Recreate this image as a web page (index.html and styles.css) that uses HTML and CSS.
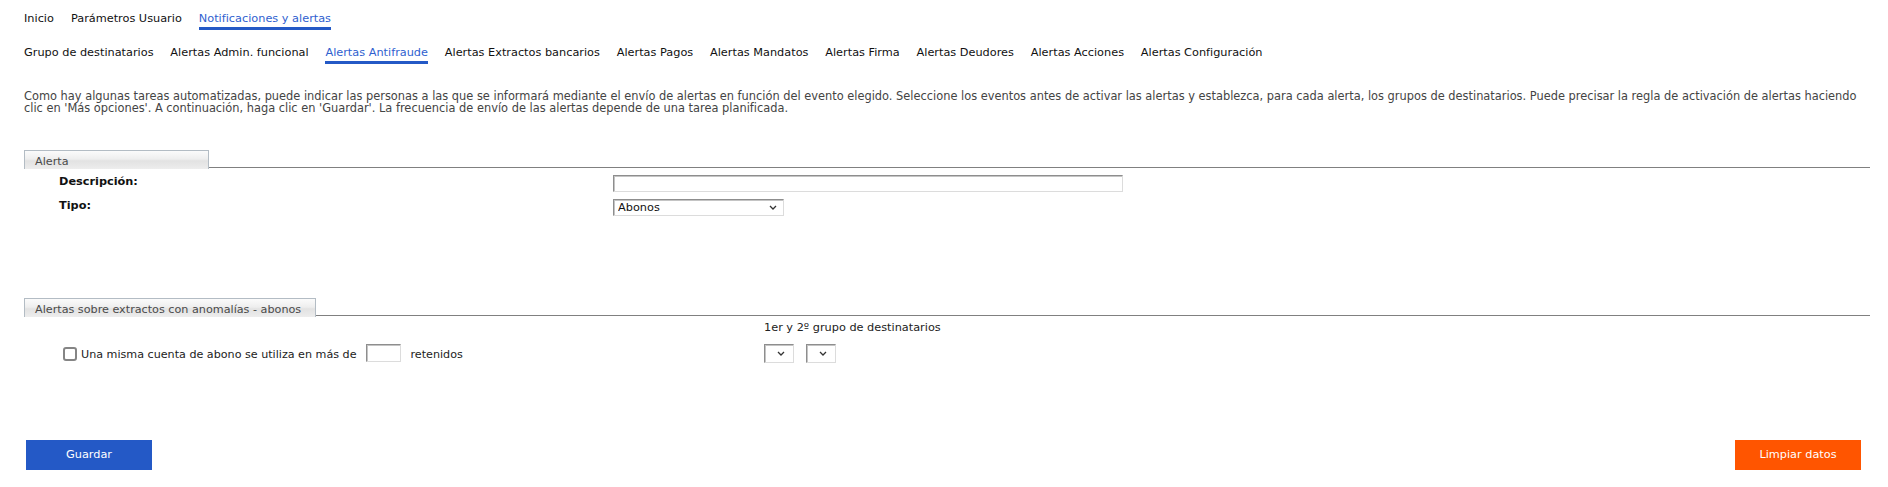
FILE: index.html
```html
<!DOCTYPE html>
<html lang="es">
<head>
  <title>Notificaciones y alertas</title>
  <link rel="stylesheet" href="styles.css">
</head>
<body>

  <div class="page">
    <nav class="menu menu-main">
      <a href="#">Inicio</a>
      <a href="#">Parámetros Usuario</a>
      <a href="#" class="active">Notificaciones y alertas</a>
    </nav>

    <nav class="menu menu-sub">
      <a href="#">Grupo de destinatarios</a>
      <a href="#">Alertas Admin. funcional</a>
      <a href="#" class="active">Alertas Antifraude</a>
      <a href="#">Alertas Extractos bancarios</a>
      <a href="#">Alertas Pagos</a>
      <a href="#">Alertas Mandatos</a>
      <a href="#">Alertas Firma</a>
      <a href="#">Alertas Deudores</a>
      <a href="#">Alertas Acciones</a>
      <a href="#">Alertas Configuración</a>
    </nav>

    <p class="intro">Como hay algunas tareas automatizadas, puede indicar las personas a las que se informará mediante el envío de alertas en función del evento elegido. Seleccione los eventos antes de activar las alertas y establezca, para cada alerta, los grupos de destinatarios. Puede precisar la regla de activación de alertas haciendo clic en 'Más opciones'. A continuación, haga clic en 'Guardar'. La frecuencia de envío de las alertas depende de una tarea planificada.</p>

    <!-- Alerta -->
    <section class="panel">
      <div class="panel-head">
        <span class="panel-tab tab-alert">Alerta</span>
        <span class="panel-rule"></span>
      </div>
      <div class="form-grid">
        <label for="desc">Descripción:</label>
        <input type="text" id="desc" class="field field-wide">
        <label for="tipo">Tipo:</label>
        <span class="select select-type">
          <select id="tipo"><option>Abonos</option></select>
          <svg viewBox="0 0 8 5" width="8" height="5"><path d="M1 1l3 3 3-3" fill="none" stroke="#333" stroke-width="1.3"/></svg>
        </span>
      </div>
    </section>

    <!-- Reglas -->
    <section class="panel panel-rules">
      <div class="panel-head">
        <span class="panel-tab tab-rules">Alertas sobre extractos con anomalías - abonos</span>
        <span class="panel-rule"></span>
      </div>
      <div class="rules-grid">
        <span></span>
        <div class="group-head">1er y 2º grupo de destinatarios</div>
        <div class="rule">
          <input type="checkbox" class="check" id="rule1">
          <label for="rule1">Una misma cuenta de abono se utiliza en más de</label>
          <input type="text" class="field field-small">
          <span>retenidos</span>
        </div>
        <div class="groups">
          <span class="select select-small">
            <select><option></option></select>
            <svg viewBox="0 0 8 5" width="8" height="5"><path d="M1 1l3 3 3-3" fill="none" stroke="#333" stroke-width="1.3"/></svg>
          </span>
          <span class="select select-small">
            <select><option></option></select>
            <svg viewBox="0 0 8 5" width="8" height="5"><path d="M1 1l3 3 3-3" fill="none" stroke="#333" stroke-width="1.3"/></svg>
          </span>
        </div>
      </div>
    </section>

    <div class="actions">
      <button class="btn btn-save">Guardar</button>
      <button class="btn btn-clear">Limpiar datos</button>
    </div>
  </div>

</body>
</html>
```
FILE: styles.css
```css
:root {
  --blue: #2459c6;
  --blue-text: #2f5fcf;
  --orange: #ff5500;
  --text: #111;
  --muted: #444;
  --rule: #808080;
}

* {
  box-sizing: border-box;
}

body {
  margin: 0;
  font-family: 'DejaVu Sans', Verdana, sans-serif;
  font-size: 11.3px;
  color: var(--text);
  background: #fff;
}

.page {
  padding: 0 18px 0 24px;
}

/* menus */
.menu {
  display: flex;
  gap: 17px;
}

.menu a {
  color: #111;
  text-decoration: none;
  line-height: 17px;
  border-bottom: 3px solid transparent;
}

.menu a.active {
  color: var(--blue-text);
  border-bottom-color: var(--blue);
}

.menu-main {
  padding-top: 10px;
}

.menu-sub {
  margin-top: 14px;
  gap: 16.8px;
}

.intro {
  margin: 27px 0 0;
  line-height: 11.8px;
  font-size: 11.4px;
  color: var(--muted);
}

/* panels */
.panel {
  margin-top: 35px;
}

.panel-rules {
  margin-top: 82px;
}

.panel-head {
  display: flex;
  align-items: flex-end;
  height: 19px;
}

.panel-tab {
  height: 19px;
  padding: 4px 0 0 10px;
  line-height: 14px;
  font-size: 11.2px;
  color: #4a4a4a;
  border: 1px solid #b3bcc4;
  border-bottom: none;
  background: linear-gradient(#fbfbfb, #eeeeee 45%, #e2e2e2 55%, #ededed);
}

.tab-alert {
  width: 185px;
}

.tab-rules {
  width: 292px;
}

.panel-rule {
  flex: 1;
  height: 1px;
  margin-bottom: 1px;
  background: var(--rule);
}

.form-grid {
  display: grid;
  grid-template-columns: 554px 1fr;
  row-gap: 7px;
  align-items: center;
  padding: 6px 0 0 35px;
}

.form-grid label {
  padding-bottom: 3px;
  font-weight: bold;
  color: #111;
}

/* controls */
.field {
  height: 17px;
  padding: 0 4px;
  font: inherit;
  border: 1px solid;
  border-color: #8e8e8e #dcdcdc #dcdcdc #8e8e8e;
  box-shadow: inset 1px 1px 0 #c4c4c4;
  background: #fff;
}

.field-wide {
  width: 510px;
}

.field-small {
  width: 35px;
  height: 18px;
  margin: 0 10px 0 9px;
}

.select {
  position: relative;
  display: inline-block;
}

.select select {
  appearance: none;
  display: block;
  width: 100%;
  height: 100%;
  margin: 0;
  padding: 0 0 0 4px;
  font: inherit;
  color: #111;
  background: #fff;
  border: 1px solid;
  border-color: #8e8e8e #dcdcdc #dcdcdc #8e8e8e;
  box-shadow: inset 1px 1px 0 #c4c4c4;
  border-radius: 0;
}

.select svg {
  position: absolute;
  top: 50%;
  margin-top: -2px;
  pointer-events: none;
}

.select-type {
  width: 171px;
  height: 17px;
}

.select-type svg {
  right: 7px;
}

.select-small {
  width: 30px;
  height: 19px;
}

.select-small svg {
  left: 13px;
}

.rules-grid {
  display: grid;
  grid-template-columns: 701px 1fr;
  align-items: center;
  padding-left: 39px;
}

.group-head {
  margin-top: 4px;
  line-height: 14px;
  color: #222;
}

.rule {
  display: flex;
  align-items: center;
  margin-top: 9px;
  font-size: 11.15px;
  color: #222;
}

.rule label {
  margin-left: 4px;
  padding-top: 2px;
}

.rule span {
  padding-top: 2px;
}

.check {
  appearance: none;
  width: 14px;
  height: 14px;
  margin: 1px 0 0;
  border: 2px solid #858585;
  border-radius: 3px;
  background: #fff;
}

.groups {
  display: flex;
  gap: 12px;
  margin-top: 9px;
}

/* buttons */
.actions {
  display: flex;
  justify-content: space-between;
  margin: 77px 9px 0 2px;
}

.btn {
  width: 126px;
  height: 30px;
  border: none;
  color: #fff;
  font: inherit;
  font-size: 11.3px;
  cursor: pointer;
}

.btn-save {
  background: var(--blue);
}

.btn-clear {
  background: var(--orange);
}
```
